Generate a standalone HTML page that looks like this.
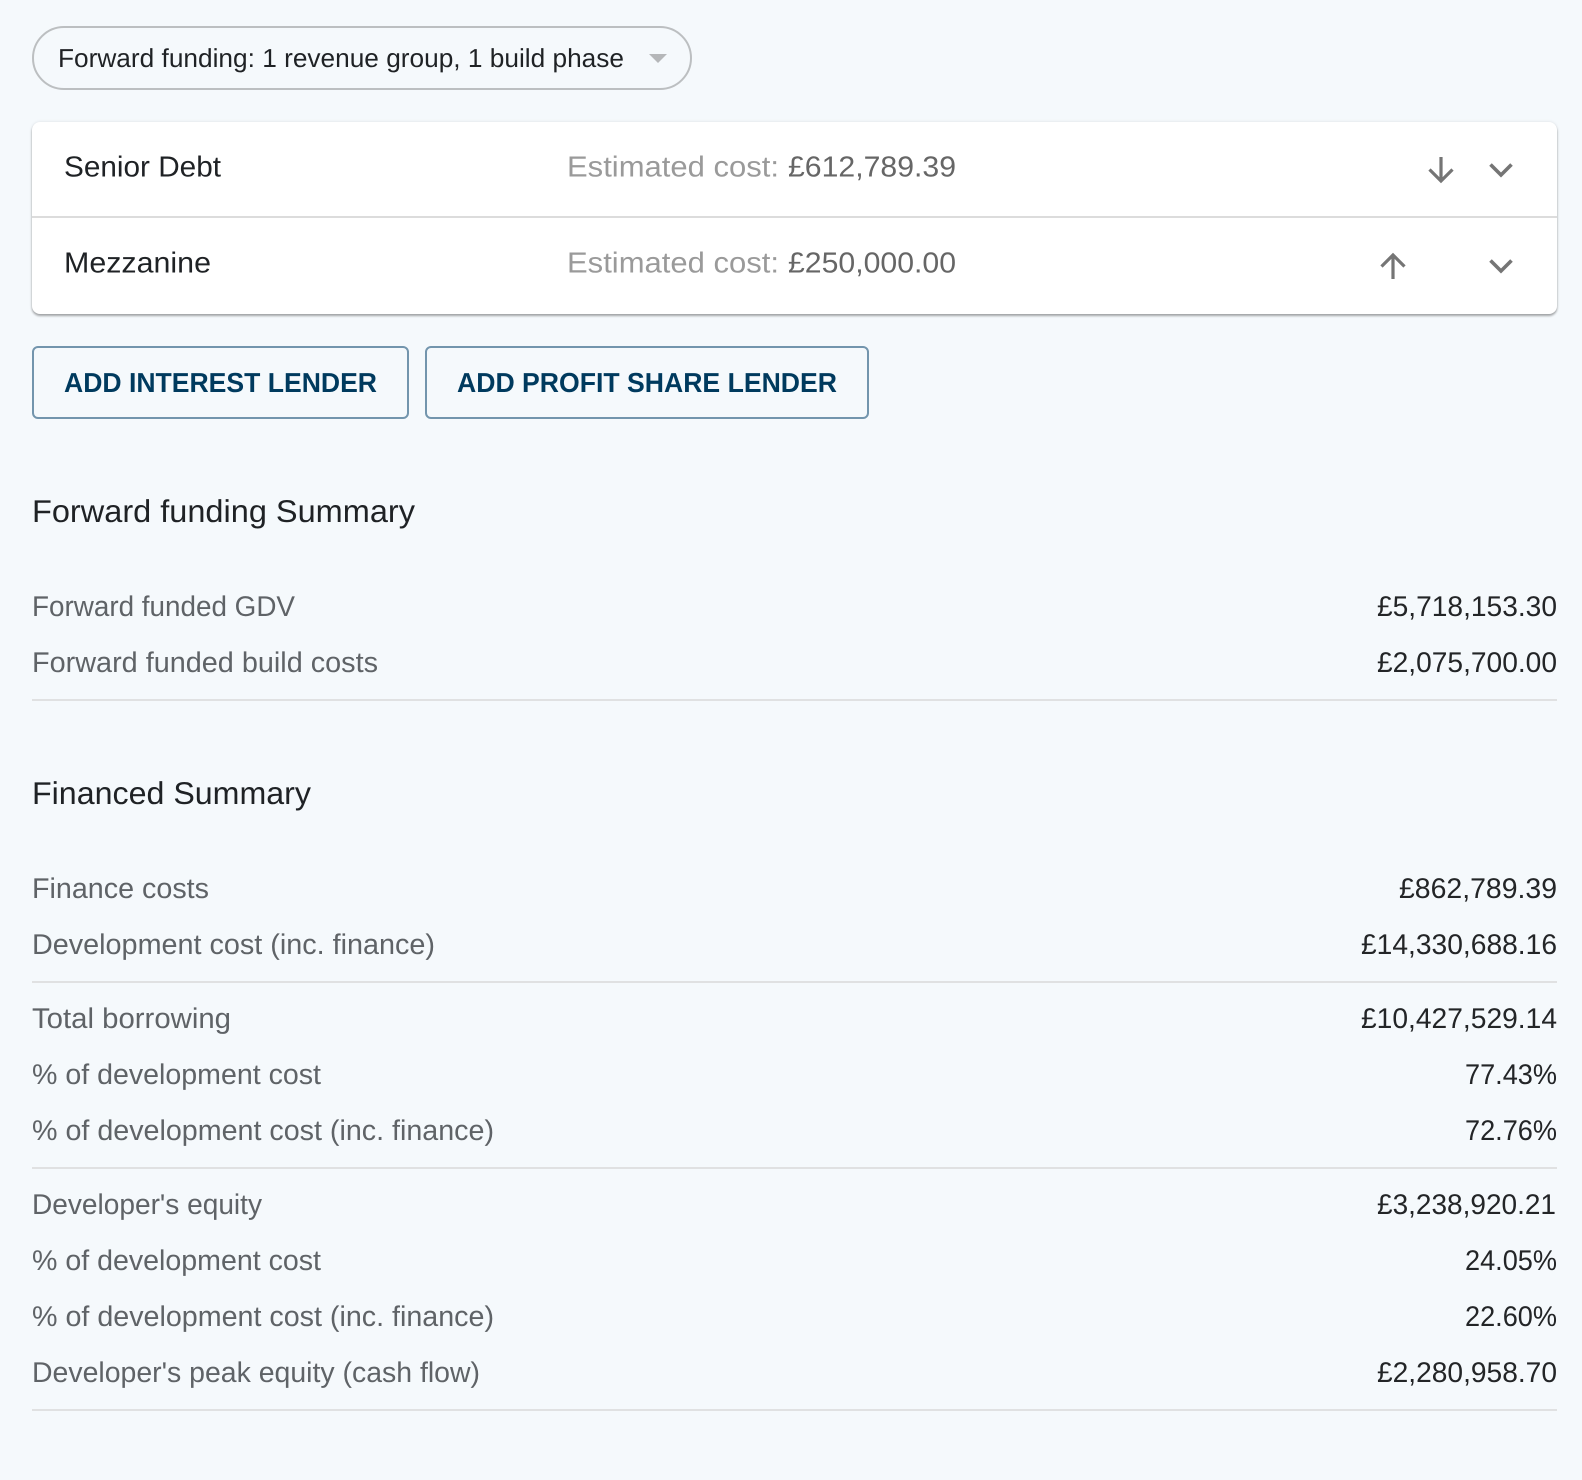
<!DOCTYPE html>
<html lang="en">
<head>
<meta charset="utf-8">
<title>Forward funding</title>
<style>
html,body{margin:0;padding:0;background:#f5f9fc;}
body{width:1582px;height:1480px;position:relative;overflow:hidden;}
.pill{position:absolute;left:32px;top:26px;width:660px;height:64px;box-sizing:border-box;border:2px solid #bcbfc1;border-radius:32px;}
.card{position:absolute;left:32px;top:122px;width:1525px;height:192px;background:#fff;border-radius:8px;box-shadow:0 2px 2px rgba(0,0,0,.32),0 0 3px rgba(0,0,0,.10);}
.btn{position:absolute;top:346px;height:73px;box-sizing:border-box;border:2px solid #7395ad;border-radius:6px;}
svg{position:absolute;left:0;top:0;}
text{font-family:"Liberation Sans",sans-serif;text-rendering:geometricPrecision;}
.l{font-size:28.5px;fill:#5f6367;}
.v{font-size:28.5px;fill:#232527;}
.h{font-size:31.5px;fill:#1f2225;}
.n{font-size:29px;fill:#1f2225;}
.e{font-size:29px;fill:#9a9a9a;}
.a{font-size:29px;fill:#666;}
.b{font-size:27.5px;font-weight:bold;fill:#003a5e;}
.p{font-size:26px;fill:#1f2225;}
</style>
</head>
<body>
<div class="pill"></div>
<div class="card"></div>
<div class="btn" style="left:32px;width:377px;"></div>
<div class="btn" style="left:425px;width:444px;"></div>
<svg width="1582" height="1480" viewBox="0 0 1582 1480" xmlns="http://www.w3.org/2000/svg">
<text class="p" x="58" y="67" textLength="566" lengthAdjust="spacingAndGlyphs">Forward funding: 1 revenue group, 1 build phase</text>
<path d="M649 54H667L658 63Z" fill="#b5b7b9"/>
<rect x="32" y="216" width="1525" height="2" fill="#dcdcdc"/>
<text class="n" x="64" y="176.5" textLength="157" lengthAdjust="spacingAndGlyphs">Senior Debt</text>
<text class="e" x="567" y="176.5" textLength="212" lengthAdjust="spacingAndGlyphs">Estimated cost:</text>
<text class="a" x="788" y="176.5" textLength="168" lengthAdjust="spacingAndGlyphs">£612,789.39</text>
<text class="n" x="64" y="272.5" textLength="147" lengthAdjust="spacingAndGlyphs">Mezzanine</text>
<text class="e" x="567" y="272.5" textLength="212" lengthAdjust="spacingAndGlyphs">Estimated cost:</text>
<text class="a" x="788" y="272.5" textLength="168" lengthAdjust="spacingAndGlyphs">£250,000.00</text>
<g fill="none" stroke="#757575" stroke-width="3.2">
<path d="M1441 157V181M1429.5 169.5L1441 181L1452.5 169.5"/>
<path d="M1490.5 164.5L1501 175L1511.5 164.5" stroke-width="3.6"/>
<path d="M1393 279V255M1381.5 266.5L1393 255L1404.5 266.5"/>
<path d="M1490.5 260.5L1501 271L1511.5 260.5" stroke-width="3.6"/>
</g>
<text class="b" x="64" y="392" textLength="313" lengthAdjust="spacingAndGlyphs">ADD INTEREST LENDER</text>
<text class="b" x="457" y="392" textLength="380" lengthAdjust="spacingAndGlyphs">ADD PROFIT SHARE LENDER</text>

<text class="h" x="32" y="522" textLength="383" lengthAdjust="spacingAndGlyphs">Forward funding Summary</text>
<text class="l" x="32" y="616" textLength="263" lengthAdjust="spacingAndGlyphs">Forward funded GDV</text>
<text class="v" x="1377" y="616" textLength="180" lengthAdjust="spacingAndGlyphs">£5,718,153.30</text>
<text class="l" x="32" y="672" textLength="346" lengthAdjust="spacingAndGlyphs">Forward funded build costs</text>
<text class="v" x="1377" y="672" textLength="180" lengthAdjust="spacingAndGlyphs">£2,075,700.00</text>
<rect x="32" y="699" width="1525" height="2" fill="#e0e1e2"/>

<text class="h" x="32" y="804" textLength="279" lengthAdjust="spacingAndGlyphs">Financed Summary</text>
<text class="l" x="32" y="898" textLength="177" lengthAdjust="spacingAndGlyphs">Finance costs</text>
<text class="v" x="1399" y="898" textLength="158" lengthAdjust="spacingAndGlyphs">£862,789.39</text>
<text class="l" x="32" y="954" textLength="403" lengthAdjust="spacingAndGlyphs">Development cost (inc. finance)</text>
<text class="v" x="1361" y="954" textLength="196" lengthAdjust="spacingAndGlyphs">£14,330,688.16</text>
<rect x="32" y="981" width="1525" height="2" fill="#e0e1e2"/>
<text class="l" x="32" y="1028" textLength="199" lengthAdjust="spacingAndGlyphs">Total borrowing</text>
<text class="v" x="1361" y="1028" textLength="196" lengthAdjust="spacingAndGlyphs">£10,427,529.14</text>
<text class="l" x="32" y="1084" textLength="289" lengthAdjust="spacingAndGlyphs">% of development cost</text>
<text class="v" x="1465" y="1084" textLength="92" lengthAdjust="spacingAndGlyphs">77.43%</text>
<text class="l" x="32" y="1140" textLength="462" lengthAdjust="spacingAndGlyphs">% of development cost (inc. finance)</text>
<text class="v" x="1465" y="1140" textLength="92" lengthAdjust="spacingAndGlyphs">72.76%</text>
<rect x="32" y="1167" width="1525" height="2" fill="#e0e1e2"/>
<text class="l" x="32" y="1214" textLength="230" lengthAdjust="spacingAndGlyphs">Developer's equity</text>
<text class="v" x="1377" y="1214" textLength="179" lengthAdjust="spacingAndGlyphs">£3,238,920.21</text>
<text class="l" x="32" y="1270" textLength="289" lengthAdjust="spacingAndGlyphs">% of development cost</text>
<text class="v" x="1465" y="1270" textLength="92" lengthAdjust="spacingAndGlyphs">24.05%</text>
<text class="l" x="32" y="1326" textLength="462" lengthAdjust="spacingAndGlyphs">% of development cost (inc. finance)</text>
<text class="v" x="1465" y="1326" textLength="92" lengthAdjust="spacingAndGlyphs">22.60%</text>
<text class="l" x="32" y="1382" textLength="448" lengthAdjust="spacingAndGlyphs">Developer's peak equity (cash flow)</text>
<text class="v" x="1377" y="1382" textLength="180" lengthAdjust="spacingAndGlyphs">£2,280,958.70</text>
<rect x="32" y="1409" width="1525" height="2" fill="#e0e1e2"/>
</svg>
</body>
</html>
